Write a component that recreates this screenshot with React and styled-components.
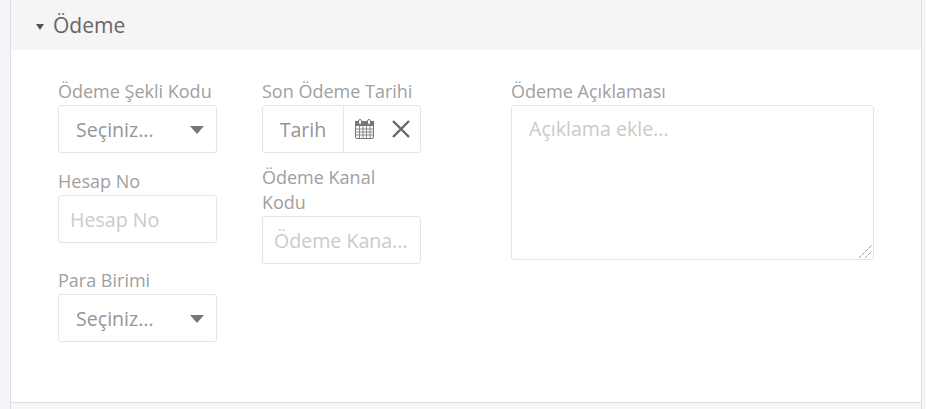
import React from 'react';
import styled, { createGlobalStyle } from 'styled-components';

const GlobalStyle = createGlobalStyle`
  html, body {
    margin: 0;
    padding: 0;
    background: #f3f5f9;
    font-family: "Open Sans", "Liberation Sans", sans-serif;
  }
  * { box-sizing: border-box; }
`;

const Page = styled.div`
  width: 926px;
  height: 409px;
  padding-left: 10px;
  padding-right: 4px;
  overflow: hidden;
`;

const Panel = styled.section`
  height: 409px;
  background: #fff;
  border-left: 1px solid #dcdee2;
  border-right: 1px solid #dcdee2;
`;

const PanelHeader = styled.div`
  height: 50px;
  background: #f5f5f5;
  display: flex;
  align-items: center;
  padding-left: 25px;
  gap: 9px;
  color: #666;
  font-size: 21px;
`;

const NextHeader = styled.div`
  height: 6px;
  background: #f7f7f7;
`;

const Caret = styled.span`
  width: 0;
  height: 0;
  margin-top: 3px;
  border-left: 4.5px solid transparent;
  border-right: 4.5px solid transparent;
  border-top: 6px solid #555;
`;

const Body = styled.div`
  height: 353px;
  display: grid;
  grid-template-columns: 159px 159px 363px;
  column-gap: 45px;
  padding: 29px 0 0 47px;
  align-items: start;
  border-bottom: 1px solid #dcdcdc;
`;

const Column = styled.div`
  display: flex;
  flex-direction: column;
`;

const WideColumn = styled.div`
  margin-left: 45px;
`;

const Field = styled.div`
  margin-top: ${p => p.$top || 0}px;
`;

const Label = styled.label`
  display: block;
  font-size: 18px;
  line-height: 25px;
  color: #a0a0a0;
  margin-bottom: 1px;
`;

const Box = styled.div`
  height: 48px;
  border: 1px solid #e4e4e4;
  border-radius: 3px;
  background: #fff;
  display: flex;
  align-items: center;
`;

const Select = styled(Box)`
  justify-content: space-between;
  padding: 0 12px 0 17px;
  font-size: 19.6px;
  color: #969696;
`;

const Arrow = styled.span`
  width: 0;
  height: 0;
  margin-top: 1px;
  border-left: 7.5px solid transparent;
  border-right: 7.5px solid transparent;
  border-top: 8px solid #777;
`;

const Input = styled.input`
  display: block;
  width: 100%;
  height: 48px;
  border: 1px solid #e4e4e4;
  border-radius: 3px;
  padding: 0 10px 0 11px;
  font: 19.6px "Open Sans", "Liberation Sans", sans-serif;
  text-overflow: ellipsis;
  outline: none;

  &::placeholder {
    color: #cbcbc7;
    opacity: 1;
  }
`;

const DateText = styled.span`
  width: 81px;
  height: 100%;
  display: flex;
  align-items: center;
  justify-content: center;
  border-right: 1px solid #e4e4e4;
  font-size: 19.6px;
  color: #969696;
`;

const DateIcons = styled.div`
  flex: 1;
  display: flex;
  align-items: center;
  justify-content: space-between;
  padding: 0 10px 0 11px;
`;

const AreaWrap = styled.div`
  position: relative;
  width: 363px;
  height: 155px;
`;

const TextArea = styled.textarea`
  display: block;
  width: 100%;
  height: 100%;
  border: 1px solid #e4e4e4;
  border-radius: 3px;
  padding: 9px 17px;
  font: 19.6px/28px "Open Sans", "Liberation Sans", sans-serif;
  resize: none;
  outline: none;

  &::placeholder {
    color: #cbcbc7;
    opacity: 1;
  }
`;

const Grip = styled.svg`
  position: absolute;
  right: 2px;
  bottom: 2px;
`;

const CalendarIcon = () => (
  <svg width="19" height="20" viewBox="0 0 19 20" fill="none">
    <rect x="0.5" y="2.5" width="18" height="17" rx="1.5" fill="#fff" stroke="#777" />
    <rect x="0.5" y="2.5" width="18" height="4" fill="#777" stroke="#777" />
    <path d="M1 10h17M1 13h17M1 16h17M4.500 7v12M8 7v12M11.500 7v12M15 7v12" stroke="#888" strokeWidth="1" />
    <rect x="3.500" y="0.500" width="3" height="5" rx="1.500" fill="#fff" stroke="#777" />
    <rect x="12.500" y="0.500" width="3" height="5" rx="1.500" fill="#fff" stroke="#777" />
  </svg>
);

const CloseIcon = () => (
  <svg width="18" height="18" viewBox="0 0 18 18" fill="none">
    <path d="M1 1l16 16M17 1L1 17" stroke="#666" strokeWidth="2.400" />
  </svg>
);

export default function App() {
  return (
    <Page>
      <GlobalStyle />
      <Panel>
        <PanelHeader>
          <Caret />
          Ödeme
        </PanelHeader>
        <Body>
          <Column>
            <Field>
              <Label>Ödeme Şekli Kodu</Label>
              <Select>Seçiniz...<Arrow /></Select>
            </Field>
            <Field $top={16}>
              <Label>Hesap No</Label>
              <Input placeholder="Hesap No" />
            </Field>
            <Field $top={25}>
              <Label>Para Birimi</Label>
              <Select>Seçiniz...<Arrow /></Select>
            </Field>
          </Column>
          <Column>
            <Field>
              <Label>Son Ödeme Tarihi</Label>
              <Box>
                <DateText>Tarih</DateText>
                <DateIcons>
                  <CalendarIcon />
                  <CloseIcon />
                </DateIcons>
              </Box>
            </Field>
            <Field $top={12}>
              <Label>Ödeme Kanal Kodu</Label>
              <Input placeholder="Ödeme Kanal Kodu" />
            </Field>
          </Column>
          <WideColumn>
            <Label>Ödeme Açıklaması</Label>
            <AreaWrap>
              <TextArea placeholder="Açıklama ekle..." />
              <Grip width="13" height="13" viewBox="0 0 13 13" fill="none">
                <path d="M0 13L13 0M6 13l7-7" stroke="#666" strokeWidth="1" strokeDasharray="1 1" />
              </Grip>
            </AreaWrap>
          </WideColumn>
        </Body>
        <NextHeader />
      </Panel>
    </Page>
  );
}
